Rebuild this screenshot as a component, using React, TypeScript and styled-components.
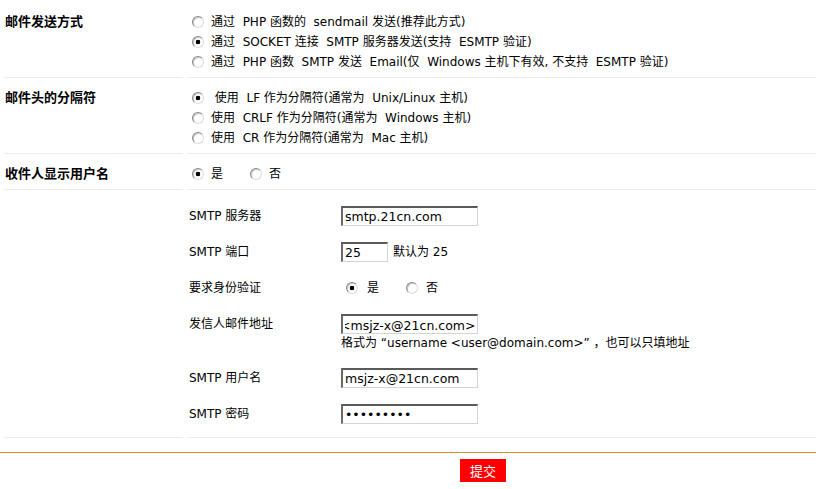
import { useEffect, useRef } from "react";
import styled, { createGlobalStyle } from "styled-components";

const GlobalStyle = createGlobalStyle`
  html, body {
    margin: 0;
    padding: 0;
    background: #ffffff;
  }
  body {
    font-family: "DejaVu Sans", "Noto Sans CJK SC", sans-serif;
    font-size: 12px;
    color: #000000;
  }
`;

const Page = styled.div`
  width: 816px;
  padding-top: 2px;
`;

const FormTable = styled.div`
  padding-left: 4px;
`;

const Row = styled.div`
  display: grid;
  grid-template-columns: 179px 1fr;
  column-gap: 4px;
`;

const LabelCell = styled.div`
  padding: 10px 0 5px 1px;
  border-bottom: 1px solid #ececec;
  font-size: 13px;
  font-weight: bold;
  line-height: 20px;
`;

const FieldCell = styled.div<{ $inner?: boolean }>`
  padding: ${(p) => (p.$inner ? "8px 0 5px 2px" : "10px 0 5px 5px")};
  border-bottom: 1px solid #ececec;
  line-height: 20px;
`;

const OptionList = styled.div`
  display: flex;
  flex-direction: column;
`;

const InlineOptions = styled.div<{ $indent?: number }>`
  display: flex;
  align-items: center;
  gap: 27px;
  padding-left: ${(p) => p.$indent ?? 0}px;
`;

const Option = styled.label<{ $gap?: number }>`
  display: flex;
  align-items: center;
  gap: ${(p) => p.$gap ?? 7}px;
  height: 20px;
  white-space: pre;
`;

const Radio = styled.input.attrs({ type: "radio" })`
  appearance: none;
  margin: 0;
  width: 12px;
  height: 12px;
  border-radius: 50%;
  border: 1px solid;
  border-color: #8a8a8a #dcdcdc #dcdcdc #8a8a8a;
  background: #ffffff;
  box-shadow: inset 1px 1px 0 #c8c8c8;
  flex: none;
  &:checked {
    background: radial-gradient(circle at center, #000000 0 2px, #ffffff 2.6px);
  }
`;

const InnerTable = styled.div`
  display: grid;
  grid-template-columns: 152px 1fr;
`;

const InnerLabel = styled.div`
  padding: 8px 0;
  line-height: 20px;
`;

const InnerField = styled.div`
  padding: 8px 0;
  line-height: 20px;
`;

const FieldLine = styled.div`
  display: flex;
  align-items: center;
  gap: 5px;
  height: 20px;
`;

const TextBox = styled.input<{ $width?: number }>`
  box-sizing: border-box;
  width: ${(p) => p.$width ?? 137}px;
  height: 20px;
  margin: 0;
  padding: 0 2px 1px;
  border: 2px solid;
  border-color: #5a5a5a #d4d4d4 #d4d4d4 #6a6a6a;
  border-right-width: 1px;
  border-bottom-width: 1px;
  font-family: "DejaVu Sans", "Noto Sans CJK SC", sans-serif;
  font-size: 12.5px;
  color: #000000;
  background: #ffffff;
  outline: none;
`;

const Hint = styled.div`
  line-height: 18px;
  white-space: pre;
`;

const OrangeRule = styled.div`
  margin-top: 14px;
  border-top: 1px solid #d98b3f;
`;

const Footer = styled.div`
  padding: 6px 0 0 460px;
`;

const SubmitButton = styled.button`
  width: 46px;
  height: 23px;
  border: none;
  padding: 0;
  background: #ff0000;
  color: #ffffff;
  font-family: "Noto Sans CJK SC", sans-serif;
  font-size: 13px;
  cursor: pointer;
`;

function ScrolledBox({ value }: { value: string }) {
  const ref = useRef<HTMLInputElement>(null);
  useEffect(() => {
    if (ref.current) ref.current.scrollLeft = ref.current.scrollWidth;
  }, []);
  return <TextBox ref={ref} defaultValue={value} />;
}

export default function App() {
  return (
    <Page>
      <GlobalStyle />
      <FormTable>
        <Row>
          <LabelCell>邮件发送方式</LabelCell>
          <FieldCell>
            <OptionList>
              <Option>
                <Radio name="mailsend" />
                {"通过  PHP 函数的  sendmail 发送(推荐此方式)"}
              </Option>
              <Option>
                <Radio name="mailsend" defaultChecked />
                {"通过  SOCKET 连接  SMTP 服务器发送(支持  ESMTP 验证)"}
              </Option>
              <Option>
                <Radio name="mailsend" />
                {"通过  PHP 函数  SMTP 发送  Email(仅  Windows 主机下有效, 不支持  ESMTP 验证)"}
              </Option>
            </OptionList>
          </FieldCell>
        </Row>

        <Row>
          <LabelCell>邮件头的分隔符</LabelCell>
          <FieldCell>
            <OptionList>
              <Option>
                <Radio name="delimiter" defaultChecked />
                {" 使用  LF 作为分隔符(通常为  Unix/Linux 主机)"}
              </Option>
              <Option>
                <Radio name="delimiter" />
                {"使用  CRLF 作为分隔符(通常为  Windows 主机)"}
              </Option>
              <Option>
                <Radio name="delimiter" />
                {"使用  CR 作为分隔符(通常为  Mac 主机)"}
              </Option>
            </OptionList>
          </FieldCell>
        </Row>

        <Row>
          <LabelCell>收件人显示用户名</LabelCell>
          <FieldCell>
            <InlineOptions>
              <Option>
                <Radio name="showname" defaultChecked />是
              </Option>
              <Option>
                <Radio name="showname" />否
              </Option>
            </InlineOptions>
          </FieldCell>
        </Row>

        <Row>
          <LabelCell />
          <FieldCell $inner>
            <InnerTable>
              <InnerLabel>SMTP 服务器</InnerLabel>
              <InnerField>
                <FieldLine>
                  <TextBox defaultValue="smtp.21cn.com" />
                </FieldLine>
              </InnerField>

              <InnerLabel>SMTP 端口</InnerLabel>
              <InnerField>
                <FieldLine>
                  <TextBox $width={47} defaultValue="25" />
                  默认为 25
                </FieldLine>
              </InnerField>

              <InnerLabel>要求身份验证</InnerLabel>
              <InnerField>
                <InlineOptions $indent={5}>
                  <Option $gap={9}>
                    <Radio name="auth" defaultChecked />是
                  </Option>
                  <Option $gap={8}>
                    <Radio name="auth" />否
                  </Option>
                </InlineOptions>
              </InnerField>

              <InnerLabel>发信人邮件地址</InnerLabel>
              <InnerField>
                <FieldLine>
                  <ScrolledBox value="秘书<msjz-x@21cn.com>" />
                </FieldLine>
                <Hint>{"格式为 “username <user@domain.com>” ，也可以只填地址"}</Hint>
              </InnerField>

              <InnerLabel>SMTP 用户名</InnerLabel>
              <InnerField>
                <FieldLine>
                  <TextBox defaultValue="msjz-x@21cn.com" />
                </FieldLine>
              </InnerField>

              <InnerLabel>SMTP 密码</InnerLabel>
              <InnerField>
                <FieldLine>
                  <TextBox type="password" defaultValue="123456789" />
                </FieldLine>
              </InnerField>
            </InnerTable>
          </FieldCell>
        </Row>
      </FormTable>

      <OrangeRule />
      <Footer>
        <SubmitButton type="button">提交</SubmitButton>
      </Footer>
    </Page>
  );
}
